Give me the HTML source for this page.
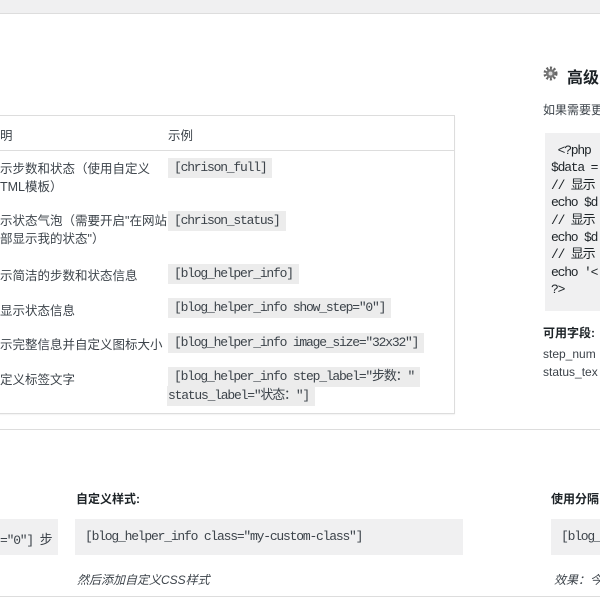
<!DOCTYPE html>
<html><head><meta charset="utf-8"><style>
*{margin:0;padding:0;box-sizing:border-box}
body{width:600px;height:600px;overflow:hidden;background:#fff;position:relative;font-family:"Liberation Sans","Noto Sans CJK SC",sans-serif;color:#3c434a;font-size:12.5px}
.a{position:absolute;white-space:nowrap}
.m{font-family:"Liberation Mono","Noto Sans CJK SC",monospace;font-size:13px;letter-spacing:-1.2px}
.c{background:#ececec;padding:2px 6px;line-height:16px}
.b{font-weight:bold;color:#1d2327}
</style></head><body>
<div class="a" style="left:0;top:0;width:600px;height:14px;background:#f0f0f1;border-bottom:1px solid #ddd"></div>
<div class="a" style="left:-2px;top:115px;width:457px;height:299px;border:1px solid #ddd;box-shadow:0 1px 1px rgba(0,0,0,.05)"></div>
<div class="a" style="left:0;top:150px;width:455px;height:1px;background:#ddd"></div>
<div class="a" style="left:0;top:125px">明</div>
<div class="a" style="left:168px;top:125px">示例</div>
<div class="a" style="left:0;top:160px;line-height:18px">示步数和状态（使用自定义<br>TML模板）</div>
<div class="a" style="left:0;top:212px;line-height:18px">示状态气泡（需要开启"在网站<br>部显示我的状态"）</div>
<div class="a" style="left:0;top:265px">示简洁的步数和状态信息</div>
<div class="a" style="left:0;top:300px">显示状态信息</div>
<div class="a" style="left:0;top:334px">示完整信息并自定义图标大小</div>
<div class="a" style="left:0;top:369px">定义标签文字</div>
<div class="a m c" style="left:168px;top:158px">[chrison_full]</div>
<div class="a m c" style="left:168px;top:211px">[chrison_status]</div>
<div class="a m c" style="left:168px;top:264px">[blog_helper_info]</div>
<div class="a m c" style="left:168px;top:298px">[blog_helper_info show_step="0"]</div>
<div class="a m c" style="left:168px;top:333px">[blog_helper_info image_size="32x32"]</div>
<div class="a m c" style="left:168px;top:367px">[blog_helper_info step_label="步数："</div>
<div class="a m c" style="left:167px;top:386px;padding-left:1px">status_label="状态："]</div>
<svg class="a" style="left:542px;top:65px" width="17" height="17" viewBox="0 0 17 17"><circle cx="8.5" cy="8.5" r="5.5" fill="none" stroke="#666" stroke-width="3" stroke-dasharray="2 1.6"/><circle cx="8.5" cy="8.5" r="4.5" fill="#777"/><circle cx="8.5" cy="8.5" r="2" fill="#ddd"/></svg>
<div class="a b" style="left:567px;top:64px;font-size:16px">高级</div>
<div class="a" style="left:543px;top:101px;font-size:12px">如果需要更</div>
<div class="a" style="left:545px;top:133px;width:60px;height:178px;background:#f0f0f1"></div>
<div class="a m" style="left:551px;top:142px;line-height:17.4px;color:#1d2327">&nbsp;&lt;?php<br>$data =<br>// 显示<br>echo $d<br>// 显示<br>echo $d<br>// 显示<br>echo '&lt;<br>?&gt;</div>
<div class="a b" style="left:543px;top:324px;font-size:12px">可用字段:</div>
<div class="a" style="left:543px;top:345px;font-size:12px;line-height:18px">step_num<br>status_tex</div>
<div class="a" style="left:0;top:429px;width:600px;height:1px;background:#ddd"></div>
<div class="a b" style="left:76px;top:490px;font-size:12px">自定义样式:</div>
<div class="a b" style="left:551px;top:490px;font-size:12px">使用分隔</div>
<div class="a" style="left:-10px;top:519px;width:68px;height:36px;background:#f0f0f1"></div>
<div class="a m" style="left:0;top:529px">="0"] 步</div>
<div class="a" style="left:75px;top:519px;width:388px;height:36px;background:#f0f0f1"></div>
<div class="a m" style="left:85px;top:529px">[blog_helper_info class="my-custom-class"]</div>
<div class="a" style="left:551px;top:519px;width:60px;height:36px;background:#f0f0f1"></div>
<div class="a m" style="left:561px;top:529px">[blog_</div>
<div class="a" style="left:77px;top:571px;font-style:italic;font-size:12px">然后添加自定义CSS样式</div>
<div class="a" style="left:554px;top:571px;font-style:italic;font-size:12px">效果：今</div>
<div class="a" style="left:0;top:596px;width:600px;height:1px;background:#ddd"></div>
</body></html>
